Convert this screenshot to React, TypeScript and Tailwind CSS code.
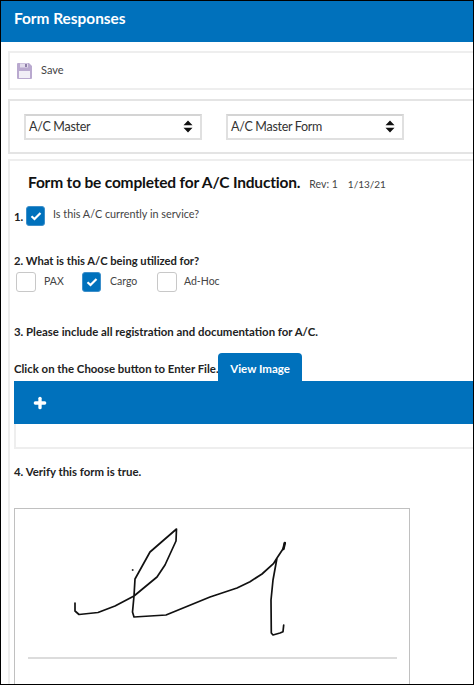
import React from 'react';
import { Plus } from 'lucide-react';

const font = "font-['Lato','Noto_Sans',sans-serif]";

const CheckBox = ({ checked = false }: { checked?: boolean }) => (
  <span
    className={
      checked
        ? 'flex h-5 w-[19px] items-center justify-center rounded-[3px] border border-[#3d8fca] bg-[#0071bc]'
        : 'flex h-5 w-5 items-center justify-center rounded-[3px] border border-[#c8c8c8] bg-white'
    }
  >
    {checked && (
      <svg width="12" height="10" viewBox="0 0 12 10" fill="none">
        <path d="M1.5 5.2 L4.5 8 L10.5 2" stroke="#fff" strokeWidth="2.2" />
      </svg>
    )}
  </span>
);

const SelectBox = ({ label }: { label: string }) => (
  <div className="flex h-[26px] w-[178px] items-center justify-between border-2 border-[#e0e0e0] border-t-[#d4d4d4] pl-[3px] pr-[7px] text-[12.5px] tracking-[-0.3px] text-[#333]">
    <span className="pt-[2px]">{label}</span>
    <svg width="10" height="13" viewBox="0 0 10 13" fill="#111">
      <path d="M5 0.5 L9.5 5.2 H0.5 Z M5 12.5 L0.5 7.8 H9.5 Z" />
    </svg>
  </div>
);

const SaveIcon = () => (
  <svg width="15" height="16" viewBox="0 0 15 16">
    <path d="M0 1 Q0 0 1 0 H12 L15 3 V15 Q15 16 14 16 H1 Q0 16 0 15 Z" fill="#b9a9cf" />
    <rect x="3" y="0.5" width="8" height="4" fill="#e2dcec" />
    <rect x="8" y="1" width="2" height="3" fill="#8f7fa8" />
    <rect x="2" y="8" width="11" height="7" fill="#f1eef6" />
  </svg>
);

export default function App() {
  return (
    <div className={`${font} h-[685px] w-[474px] overflow-hidden border border-black bg-white`}>
      <div className="flex h-[41px] items-center bg-[#0071bc] pl-[13px] pb-[5px] text-[15.4px] font-bold text-white">
        Form Responses
      </div>

      <div className="mt-[9px] ml-[7px] flex h-[39px] w-[480px] items-center gap-[9px] border-2 border-[#eeeeee] pl-[7px] text-[11px] text-[#444]">
        <SaveIcon />
        <span>Save</span>
      </div>

      <div className="mt-[9px] ml-[7px] flex h-[55px] w-[480px] items-center gap-[24px] border-2 border-[#e4e4e4] pl-[14px]">
        <SelectBox label="A/C Master" />
        <SelectBox label="A/C Master Form" />
      </div>

      <div className="mt-[5px] ml-[7px] h-[540px] w-[480px] border-2 border-[#eeeeee] pl-[4px] text-[11.4px] text-[#222]">
        <div className="mt-[10px] ml-[14px] flex items-baseline">
          <span className="text-[15.5px] font-bold tracking-[-0.18px] text-[#111]">Form to be completed for A/C Induction.</span>
          <span className="ml-[9px] text-[10.5px] text-[#444]">Rev: 1</span>
          <span className="ml-[10px] text-[10px] text-[#444]">1/13/21</span>
        </div>

        <div className="mt-[12px] flex items-start">
          <span className="mt-[2px] w-[12px] font-bold">1.</span>
          <CheckBox checked />
          <span className="ml-[8px] text-[10.8px] text-[#444]">Is this A/C currently in service?</span>
        </div>

        <div className="mt-[27px] text-[11.2px] font-bold">2. What is this A/C being utilized for?</div>
        <div className="mt-[2px] ml-[2px] flex items-center text-[10.5px]">
          <CheckBox />
          <span className="ml-[8px] w-[38px] text-[#444]">PAX</span>
          <CheckBox checked />
          <span className="ml-[9px] w-[47px] text-[#444]">Cargo</span>
          <CheckBox />
          <span className="ml-[7px] text-[#444]">Ad-Hoc</span>
        </div>

        <div className="mt-[31px] font-bold">3. Please include all registration and documentation for A/C.</div>

        <div className="mt-[13px] flex items-end">
          <span className="w-[204px] whitespace-nowrap pb-[4px] font-bold">Click on the Choose button to Enter File.</span>
          <button className="flex h-[28px] w-[84px] items-center justify-center rounded-t-[4px] bg-[#0071bc] pt-[3px] text-[11.5px] font-bold text-white">
            View Image
          </button>
        </div>
        <div className="flex h-[43px] items-center bg-[#0071bc] pl-[18px]">
          <Plus size={16} color="#fff" strokeWidth={5} />
        </div>
        <div className="h-[25px] border-2 border-t-0 border-[#eeeeee]" />

        <div className="mt-[14px] font-bold">4. Verify this form is true.</div>

        <div className="mt-[28px] h-[200px] w-[396px] border border-[#c0c0c0]">
          <svg width="394" height="198" viewBox="15 509 394 198" fill="none" className="block">
            <path
              d="M75 603 L75 611 L79 614.5 L98 612.5 L115 606 L134 596 L157 577 L165 565 L176 541 L176.5 529 L150 552 L135 579 L134 596 L132.5 612 L134 617 L166 615 L210 597 L237 588 L250 581.7 L262 574 L273.7 563.3 L277 558 L283.6 548 L284.7 543 M277 558 L273 580 L271 600 L271.3 633 L273 635 L280 633 L283 631.7 L283.7 625"
              stroke="#111"
              strokeWidth="1.7"
              strokeLinejoin="round"
              strokeLinecap="round"
            />
            <path d="M283.4 549 L284.8 543" stroke="#111" strokeWidth="2.6" strokeLinecap="round" />
            <circle cx="132.7" cy="570" r="1" fill="#333" />
            <rect x="28" y="657" width="369" height="2" fill="#dcdcdc" />
          </svg>
        </div>
      </div>
    </div>
  );
}
